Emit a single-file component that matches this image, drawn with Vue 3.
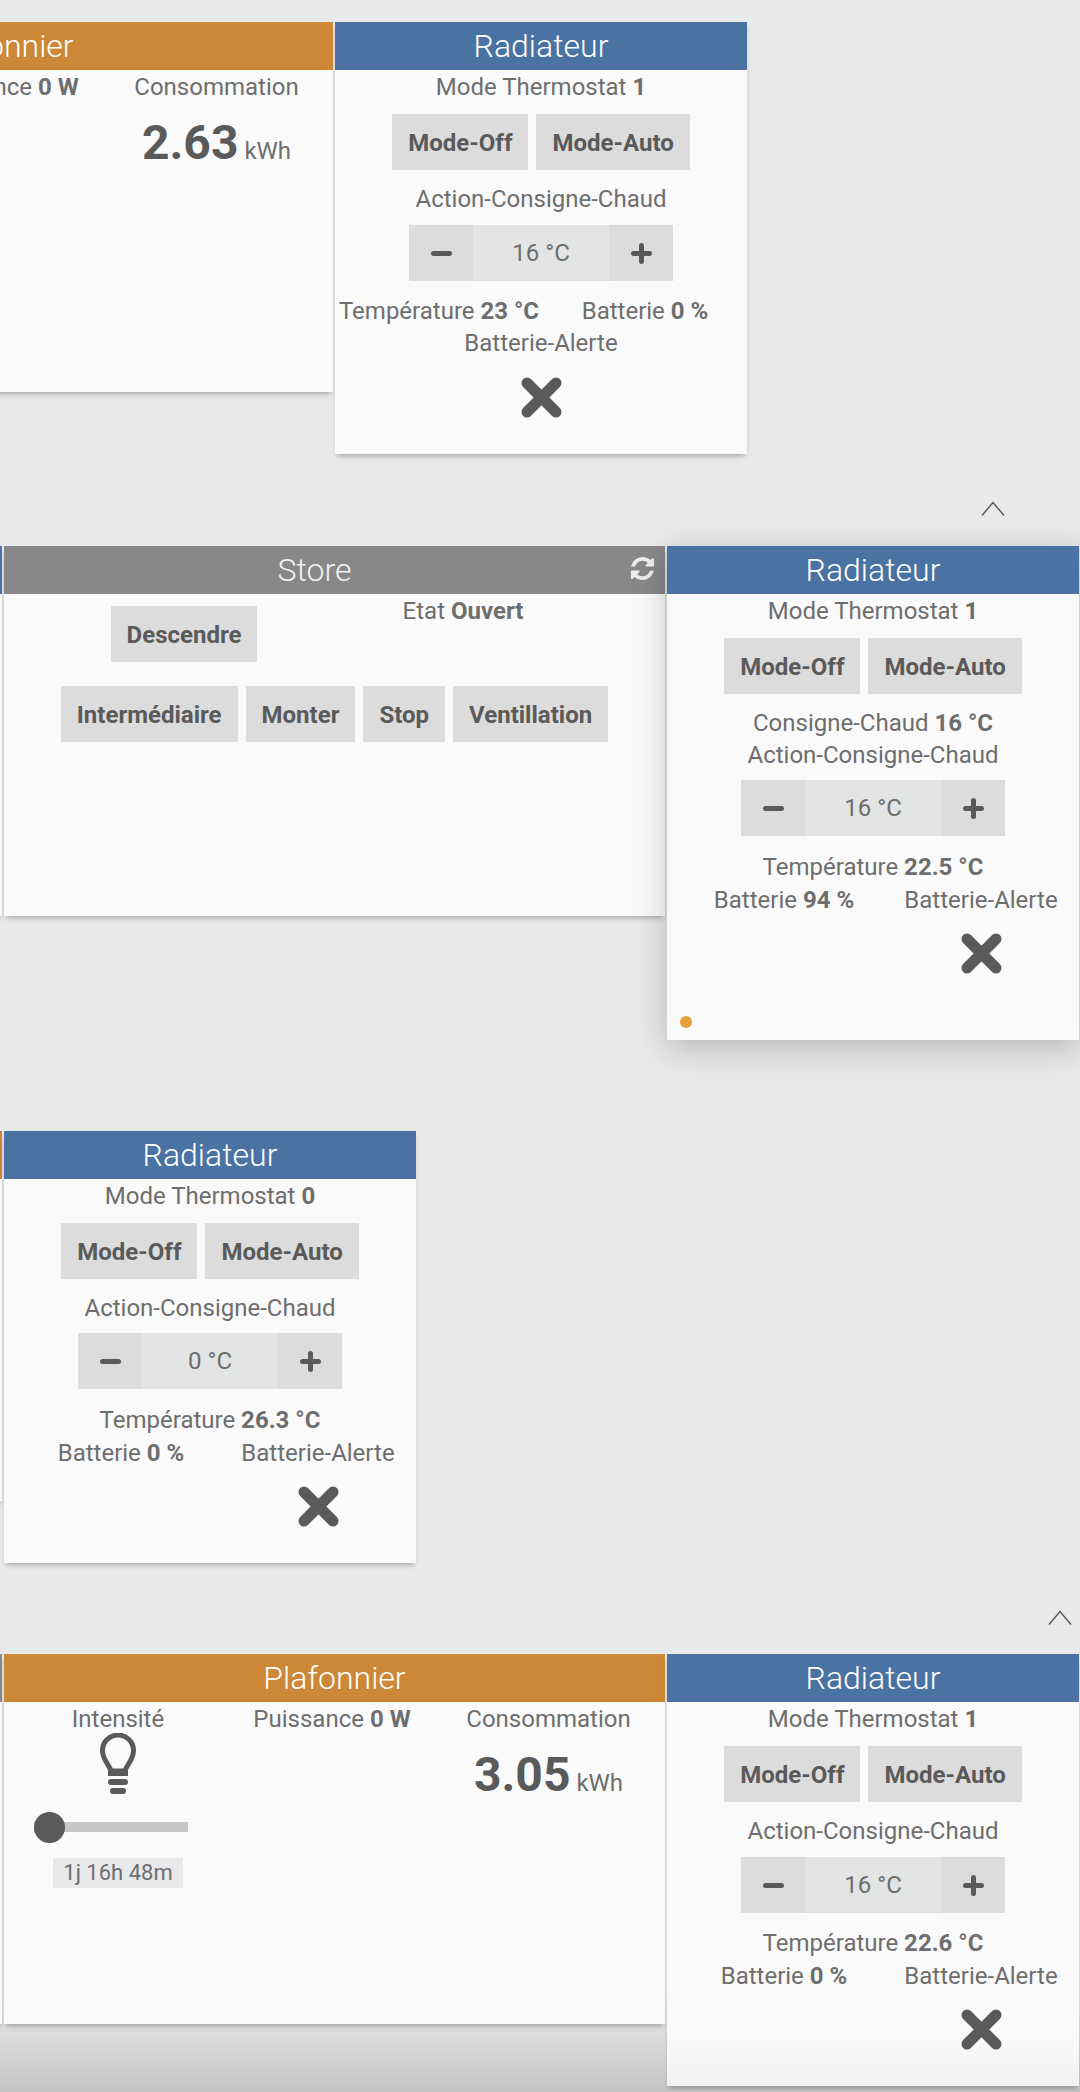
<script setup>
const rows = [
  {
    id: 'r1', cls: 'first', cards: [
      { type: 'plaf', value: '2.63' },
      { type: 'rad', mode: 1, set: 16, temp: '23', batt: 0, layout: 'split' },
    ],
  },
  {
    id: 'r2', cls: 'after-rad', chevron: 'chev-a', cards: [
      { type: 'sliver', color: 'blue', size: 'narrow' },
      { type: 'store' },
      { type: 'rad', mode: 1, set: 16, temp: '22.5', batt: 94, layout: 'wide', consigne: 16, dot: true },
    ],
  },
  {
    id: 'r3', cls: 'after-wide', cards: [
      { type: 'sliver', color: 'orange', size: 'wide' },
      { type: 'rad', mode: 0, set: 0, temp: '26.3', batt: 0, layout: 'wide' },
    ],
  },
  {
    id: 'r4', cls: 'after-wide', chevron: 'chev-b', cards: [
      { type: 'sliver', color: 'grey', size: 'wide' },
      { type: 'plaf', value: '3.05' },
      { type: 'rad', mode: 1, set: 16, temp: '22.6', batt: 0, layout: 'wide' },
    ],
  },
]
const storeButtons = ['Intermédiaire', 'Monter', 'Stop', 'Ventillation']
</script>

<template>
  <main class="page">
    <section v-for="row in rows" :key="row.id" class="section">
      <div v-if="row.chevron" class="chevron-bar" :class="row.chevron">
        <svg width="24" height="15" viewBox="0 0 24 15"><path d="M1 14.5 12 1.5 23 14.5" fill="none" stroke="#555" stroke-width="1.4" /></svg>
      </div>
      <div v-else class="spacer" :class="row.cls"></div>
      <div class="row" :class="row.id">
        <template v-for="(card, i) in row.cards" :key="i">
          <article v-if="card.type === 'sliver'" class="card" :class="[card.size, 'h-short']">
            <header class="head" :class="card.color"></header>
          </article>

          <article v-else-if="card.type === 'plaf'" class="card wide h-short">
            <header class="head orange"><span class="title">Plafonnier</span></header>
            <div class="plaf-grid">
              <div class="col intensity">
                <div class="line">Intensité</div>
                <svg class="bulb" width="36" height="61" viewBox="0 0 36 61">
                  <path d="M11 38C9 31 2.500 27 2.500 17.500A15.500 15.500 0 0 1 33.500 17.500C33.500 27 27 31 25 38Z" fill="none" stroke="#5a5a5a" stroke-width="5" stroke-linejoin="round" />
                  <rect x="8" y="37" width="20" height="6" fill="#5a5a5a" />
                  <rect x="8" y="46" width="20" height="6" rx="3" fill="#5a5a5a" />
                  <rect x="10" y="55" width="16" height="6" rx="3" fill="#5a5a5a" />
                </svg>
                <div class="slider"><span class="thumb"></span></div>
                <div class="chip">1j 16h 48m</div>
              </div>
              <div class="col">
                <div class="line">Puissance <b>0 W</b></div>
              </div>
              <div class="col conso">
                <div class="line">Consommation</div>
                <div class="value"><b>{{ card.value }}</b> <span>kWh</span></div>
              </div>
            </div>
          </article>

          <article v-else-if="card.type === 'store'" class="card wide h-short">
            <header class="head grey store-head">
              <span class="title">Store</span>
              <svg class="refresh" width="27" height="27" viewBox="0 0 1792 1792"><path fill="#eee" d="M1639 1056q0 5-1 7-64 268-268 434.500t-478 166.500q-146 0-282.500-55t-243.500-157l-129 129q-19 19-45 19t-45-19-19-45v-448q0-26 19-45t45-19h448q26 0 45 19t19 45-19 45l-137 137q71 66 161 102t187 36q134 0 250-65t186-179q11-17 53-117 8-23 30-23h192q13 0 22.500 9.500t9.500 22.500zm25-800v448q0 26-19 45t-45 19h-448q-26 0-45-19t-19-45 19-45l138-138q-148-137-349-137-134 0-250 65t-186 179q-11 17-53 117-8 23-30 23h-199q-13 0-22.500-9.500t-9.500-22.500v-7q65-268 270-434.500t480-166.500q146 0 284 55.500t245 156.500l130-129q19-19 45-19t45 19 19 45z" /></svg>
            </header>
            <div class="store-top">
              <button class="btn">Descendre</button>
              <div class="line">Etat <b>Ouvert</b></div>
            </div>
            <div class="btn-row store-bottom">
              <button v-for="b in storeButtons" :key="b" class="btn">{{ b }}</button>
            </div>
          </article>

          <article v-else class="card narrow" :class="card.dot ? 'h-tall raised' : 'h-mid'">
            <header class="head blue"><span class="title">Radiateur</span></header>
            <div class="line">Mode Thermostat <b>{{ card.mode }}</b></div>
            <div class="btn-row modes">
              <button class="btn">Mode-Off</button>
              <button class="btn">Mode-Auto</button>
            </div>
            <div v-if="card.consigne" class="line">Consigne-Chaud <b>{{ card.consigne }} °C</b></div>
            <div class="line" :class="card.consigne ? '' : 'action'">Action-Consigne-Chaud</div>
            <div class="stepper" :class="card.consigne ? 'tight' : ''">
              <span class="step">
                <svg width="21" height="5" viewBox="0 0 21 5"><path d="M2.500 2.500H18.500" stroke="#5a5a5a" stroke-width="5" stroke-linecap="round" /></svg>
              </span>
              <span class="step-val">{{ card.set }} °C</span>
              <span class="step">
                <svg width="21" height="21" viewBox="0 0 21 21"><path d="M2.500 10.500H18.500M10.500 2.500V18.500" stroke="#5a5a5a" stroke-width="5" stroke-linecap="round" /></svg>
              </span>
            </div>
            <div v-if="card.layout === 'split'" class="stats-split">
              <div class="line">Température <b>{{ card.temp }} °C</b></div>
              <div class="line">Batterie <b>{{ card.batt }} %</b></div>
              <div class="line full">Batterie-Alerte</div>
              <div class="x-cell full">
                <svg width="41" height="41" viewBox="0 0 41 41"><path d="M6 6 35 35M35 6 6 35" stroke="#5a5a5a" stroke-width="11" stroke-linecap="round" /></svg>
              </div>
            </div>
            <div v-else class="stats-wide">
              <div class="line full temp">Température <b>{{ card.temp }} °C</b></div>
              <div class="line">Batterie <b>{{ card.batt }} %</b></div>
              <div class="line alert">Batterie-Alerte</div>
              <div class="x-cell second">
                <svg width="41" height="41" viewBox="0 0 41 41"><path d="M6 6 35 35M35 6 6 35" stroke="#5a5a5a" stroke-width="11" stroke-linecap="round" /></svg>
              </div>
            </div>
            <span v-if="card.dot" class="dot"></span>
          </article>
        </template>
      </div>
    </section>
    <div class="fade"></div>
  </main>
</template>

<style>
html, body { margin: 0; background: #e8e9eb; }
</style>

<style scoped>
.page {
  position: relative;
  width: 1080px;
  height: 2092px;
  overflow: hidden;
  background: linear-gradient(#e8e9eb 1990px, #cccccc);
  font-family: Roboto, "Liberation Sans", sans-serif;
  font-size: 24px;
  color: #6e6e6e;
}
.first { height: 22px; }
.after-wide { height: 91px; }
.chevron-bar {
  display: flex;
  justify-content: flex-end;
  box-sizing: border-box;
  height: 92px;
  padding-top: 47px;
}
.chev-a { padding-right: 75px; }
.chev-b { height: 91px; padding-top: 47px; padding-right: 8px; }
.row { display: flex; align-items: flex-start; gap: 2px; }
.r1 { margin-left: -328px; }
.r2 { margin-left: -410px; }
.r3, .r4 { margin-left: -659px; }
.card {
  position: relative;
  flex: none;
  box-sizing: border-box;
  background: #fafafa;
  text-align: center;
  box-shadow: 0 4px 5px -2px rgba(0, 0, 0, .28);
}
.wide { width: 661px; }
.narrow { width: 412px; }
.h-short { height: 370px; }
.h-mid { height: 432px; }
.h-tall { height: 494px; }
.raised { z-index: 2; box-shadow: 0 8px 32px rgba(0, 0, 0, .22); }
.head {
  height: 48px;
  display: flex;
  align-items: center;
  justify-content: center;
  color: #fff;
}
.blue { background: #4a72a2; }
.orange { background: #cc8836; }
.grey { background: #888; }
.title { font-size: 32px; font-weight: 300; line-height: 48px; }
.store-head { position: relative; padding-right: 40px; color: #f2f2f2; }
.refresh { position: absolute; right: 9px; top: 9px; }
.line { height: 32px; line-height: 34px; white-space: nowrap; }
b { font-weight: 700; }
.btn-row { display: flex; justify-content: center; gap: 8px; }
.btn {
  height: 56px;
  padding: 2px 16px 0;
  border: 0;
  border-radius: 0;
  background: #dcdcdc;
  color: #5a5a5a;
  font: 700 24px Roboto, "Liberation Sans", sans-serif;
}
.modes { margin: 12px 0; }
.action { height: 42px; }
.stepper {
  display: flex;
  justify-content: center;
  height: 56px;
  margin-bottom: 14px;
}
.r1 .action, .r4 .action { height: 43px; }
.r1 .stepper, .r4 .stepper { margin-bottom: 13px; }
.tight { margin-top: 10px; }
.step {
  width: 64px;
  background: #dcdcdc;
  display: flex;
  align-items: center;
  justify-content: center;
}
.step-val {
  width: 136px;
  background: #e3e4e4;
  line-height: 56px;
}
.stats-split { display: grid; grid-template-columns: 208px 204px; }
.stats-split .x-cell { padding-top: 19px; }
.stats-wide { display: grid; grid-template-columns: 234px 178px; }
.temp { margin-bottom: 1px; }
.alert, .second { width: 160px; }
.full { grid-column: 1 / -1; }
.second { grid-column: 2; }
.x-cell { display: flex; justify-content: center; padding-top: 18px; }
.x-cell svg { display: block; }
.dot {
  position: absolute;
  left: 13px;
  bottom: 12px;
  width: 12px;
  height: 12px;
  border-radius: 50%;
  background: #e59e3c;
}
.plaf-grid { display: grid; grid-template-columns: 228px 200px 233px; }
.intensity { display: flex; flex-direction: column; align-items: center; }
.bulb { display: block; margin-top: -1px; }
.slider {
  position: relative;
  width: 154px;
  height: 10px;
  margin-top: 28px;
  margin-right: 14px;
  background: #c6c6c6;
}
.thumb {
  position: absolute;
  left: 0;
  top: -10px;
  width: 31px;
  height: 31px;
  border-radius: 50%;
  background: #5a5a5a;
}
.chip {
  margin-top: 26px;
  padding: 0 10px;
  height: 30px;
  line-height: 30px;
  background: #e8e9eb;
  font-size: 22px;
}
.value { margin-top: 13px; line-height: 56px; color: #5a5a5a; white-space: nowrap; }
.value b { font-size: 48px; }
.value span { font-size: 24px; color: #6e6e6e; }
.store-top { display: grid; grid-template-columns: 360px 198px; justify-items: center; align-items: start; }
.store-top .btn { margin-top: 12px; }
.store-bottom { margin-top: 24px; }
.fade {
  position: absolute;
  left: 0;
  right: 0;
  bottom: 0;
  height: 60px;
  background: linear-gradient(rgba(0, 0, 0, 0), rgba(0, 0, 0, .04));
  pointer-events: none;
  z-index: 5;
}
</style>
